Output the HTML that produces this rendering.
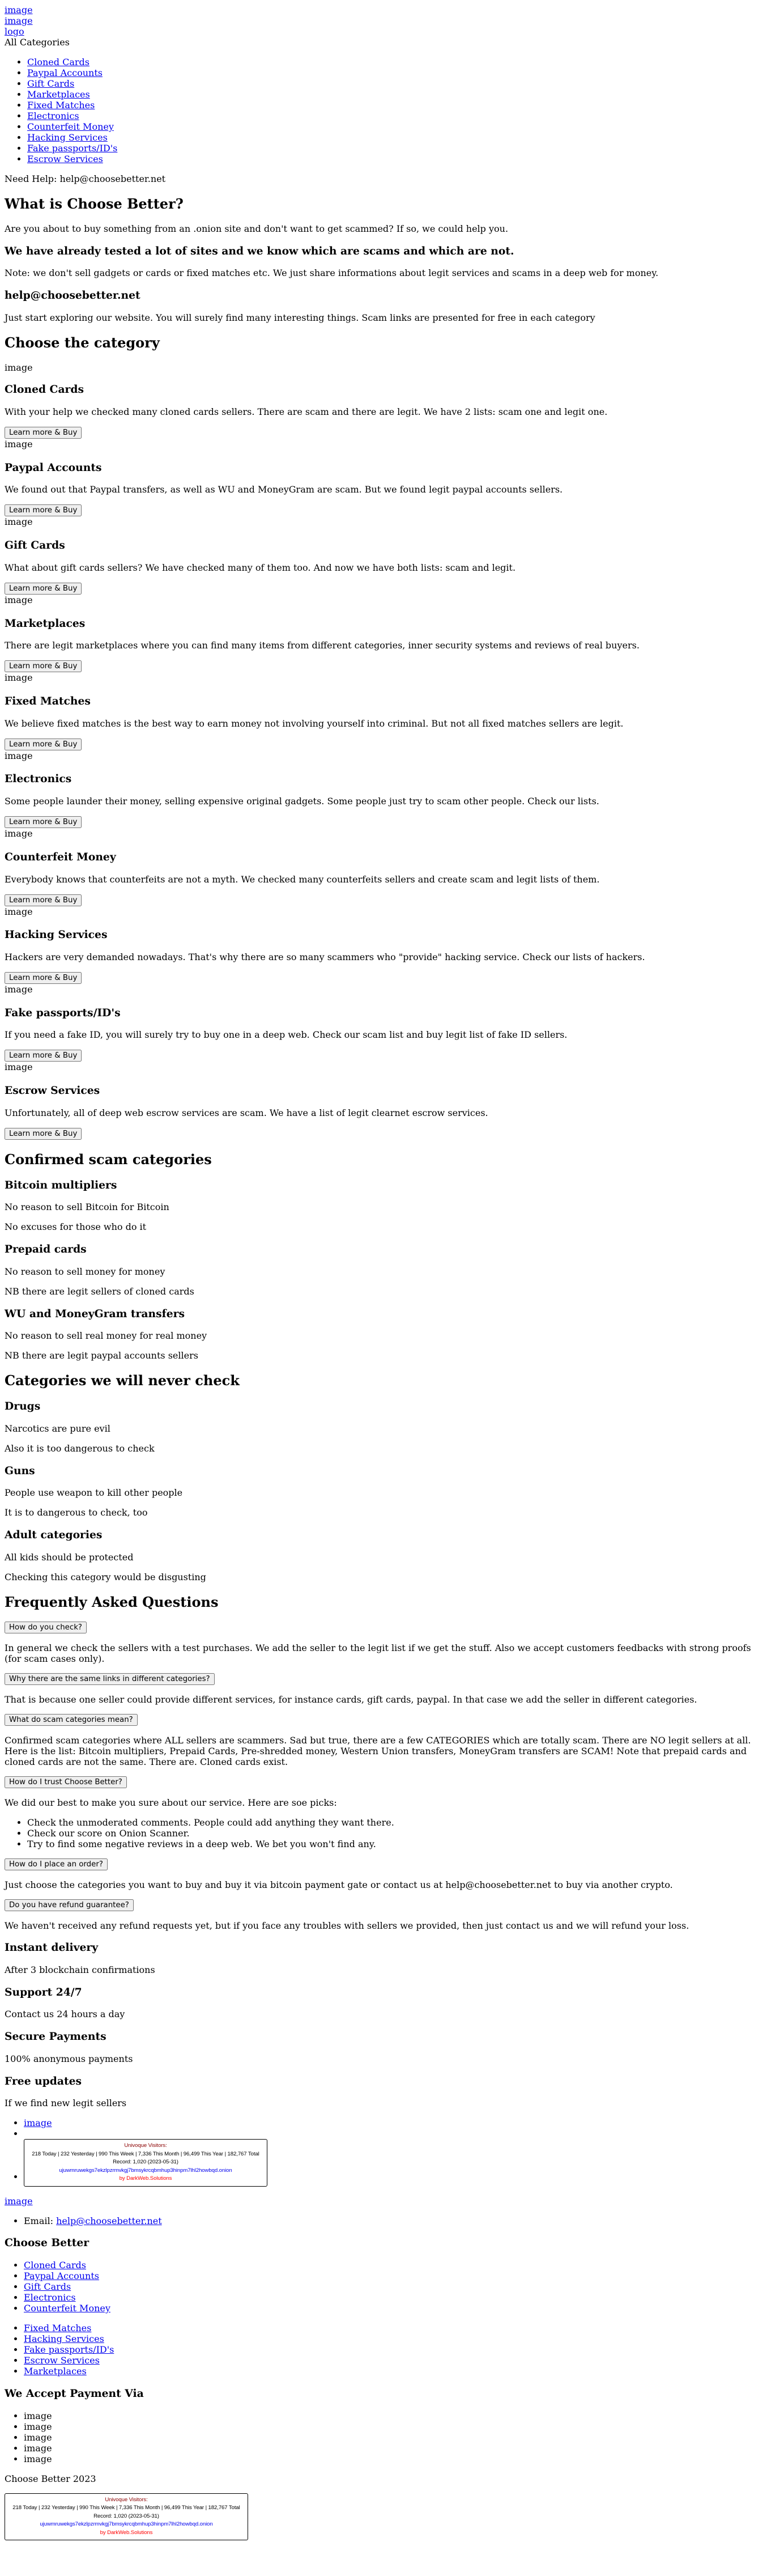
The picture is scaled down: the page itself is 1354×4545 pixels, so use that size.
<!DOCTYPE html>
<html><head><meta charset="utf-8">
<style>
body{font-family:"DejaVu Serif",serif;font-size:16px;margin:8px;color:#000;background:#fff}
a{color:#0000ee}
button{font-family:"DejaVu Sans",sans-serif;font-size:13.333px}
.img{padding-bottom:2px}
.faq button{display:block}
.ft{padding-left:34px}
.vis{display:inline-block;width:428px;border:1px solid #000;border-radius:3px;text-align:center;font-family:"Liberation Sans",Arial,sans-serif;font-size:9.6px;line-height:14.5px;padding:4px 0 5px;letter-spacing:-0.1px}
.vis .t{color:#8b0000}
.vis .o{color:#0000ee}
.vis .r{color:#f00}
</style></head><body>
<div><a href="#">image</a></div>
<div><a href="#">image</a></div>
<div><a href="#">logo</a></div>
<div>All Categories</div>
<ul>
<li><a href="#">Cloned Cards</a></li>
<li><a href="#">Paypal Accounts</a></li>
<li><a href="#">Gift Cards</a></li>
<li><a href="#">Marketplaces</a></li>
<li><a href="#">Fixed Matches</a></li>
<li><a href="#">Electronics</a></li>
<li><a href="#">Counterfeit Money</a></li>
<li><a href="#">Hacking Services</a></li>
<li><a href="#">Fake passports/ID's</a></li>
<li><a href="#">Escrow Services</a></li>
</ul>
<div>Need Help: help@choosebetter.net</div>
<h2>What is Choose Better?</h2>
<p>Are you about to buy something from an .onion site and don't want to get scammed? If so, we could help you.</p>
<h3>We have already tested a lot of sites and we know which are scams and which are not.</h3>
<p>Note: we don't sell gadgets or cards or fixed matches etc. We just share informations about legit services and scams in a deep web for money.</p>
<h3>help@choosebetter.net</h3>
<p>Just start exploring our website. You will surely find many interesting things. Scam links are presented for free in each category</p>
<h2>Choose the category</h2>
<p>image</p>
<h3>Cloned Cards</h3>
<p>With your help we checked many cloned cards sellers. There are scam and there are legit. We have 2 lists: scam one and legit one.</p>
<div><button>Learn more &amp; Buy</button></div><div class="img">image</div>
<h3>Paypal Accounts</h3>
<p>We found out that Paypal transfers, as well as WU and MoneyGram are scam. But we found legit paypal accounts sellers.</p>
<div><button>Learn more &amp; Buy</button></div><div class="img">image</div>
<h3>Gift Cards</h3>
<p>What about gift cards sellers? We have checked many of them too. And now we have both lists: scam and legit.</p>
<div><button>Learn more &amp; Buy</button></div><div class="img">image</div>
<h3>Marketplaces</h3>
<p>There are legit marketplaces where you can find many items from different categories, inner security systems and reviews of real buyers.</p>
<div><button>Learn more &amp; Buy</button></div><div class="img">image</div>
<h3>Fixed Matches</h3>
<p>We believe fixed matches is the best way to earn money not involving yourself into criminal. But not all fixed matches sellers are legit.</p>
<div><button>Learn more &amp; Buy</button></div><div class="img">image</div>
<h3>Electronics</h3>
<p>Some people launder their money, selling expensive original gadgets. Some people just try to scam other people. Check our lists.</p>
<div><button>Learn more &amp; Buy</button></div><div class="img">image</div>
<h3>Counterfeit Money</h3>
<p>Everybody knows that counterfeits are not a myth. We checked many counterfeits sellers and create scam and legit lists of them.</p>
<div><button>Learn more &amp; Buy</button></div><div class="img">image</div>
<h3>Hacking Services</h3>
<p>Hackers are very demanded nowadays. That's why there are so many scammers who "provide" hacking service. Check our lists of hackers.</p>
<div><button>Learn more &amp; Buy</button></div><div class="img">image</div>
<h3>Fake passports/ID's</h3>
<p>If you need a fake ID, you will surely try to buy one in a deep web. Check our scam list and buy legit list of fake ID sellers.</p>
<div><button>Learn more &amp; Buy</button></div><div class="img">image</div>
<h3>Escrow Services</h3>
<p>Unfortunately, all of deep web escrow services are scam. We have a list of legit clearnet escrow services.</p>
<div><button>Learn more &amp; Buy</button></div>
<h2>Confirmed scam categories</h2>
<h3>Bitcoin multipliers</h3>
<p>No reason to sell Bitcoin for Bitcoin</p>
<p>No excuses for those who do it</p>
<h3>Prepaid cards</h3>
<p>No reason to sell money for money</p>
<p>NB there are legit sellers of cloned cards</p>
<h3>WU and MoneyGram transfers</h3>
<p>No reason to sell real money for real money</p>
<p>NB there are legit paypal accounts sellers</p>
<h2>Categories we will never check</h2>
<h3>Drugs</h3>
<p>Narcotics are pure evil</p>
<p>Also it is too dangerous to check</p>
<h3>Guns</h3>
<p>People use weapon to kill other people</p>
<p>It is to dangerous to check, too</p>
<h3>Adult categories</h3>
<p>All kids should be protected</p>
<p>Checking this category would be disgusting</p>
<h2>Frequently Asked Questions</h2>
<div class="faq">
<button>How do you check?</button>
<p>In general we check the sellers with a test purchases. We add the seller to the legit list if we get the stuff. Also we accept customers feedbacks with strong proofs (for scam cases only).</p>
<button>Why there are the same links in different categories?</button>
<p>That is because one seller could provide different services, for instance cards, gift cards, paypal. In that case we add the seller in different categories.</p>
<button>What do scam categories mean?</button>
<p>Confirmed scam categories where ALL sellers are scammers. Sad but true, there are a few CATEGORIES which are totally scam. There are NO legit sellers at all. Here is the list: Bitcoin multipliers, Prepaid Cards, Pre-shredded money, Western Union transfers, MoneyGram transfers are SCAM! Note that prepaid cards and cloned cards are not the same. There are. Cloned cards exist.</p>
<button>How do I trust Choose Better?</button>
<p>We did our best to make you sure about our service. Here are soe picks:</p>
<ul>
<li>Check the unmoderated comments. People could add anything they want there.</li>
<li>Check our score on Onion Scanner.</li>
<li>Try to find some negative reviews in a deep web. We bet you won't find any.</li>
</ul>
<button>How do I place an order?</button>
<p>Just choose the categories you want to buy and buy it via bitcoin payment gate or contact us at help@choosebetter.net to buy via another crypto.</p>
<button>Do you have refund guarantee?</button>
<p>We haven't received any refund requests yet, but if you face any troubles with sellers we provided, then just contact us and we will refund your loss.</p>
</div>
<h3>Instant delivery</h3>
<p>After 3 blockchain confirmations</p>
<h3>Support 24/7</h3>
<p>Contact us 24 hours a day</p>
<h3>Secure Payments</h3>
<p>100% anonymous payments</p>
<h3>Free updates</h3>
<p>If we find new legit sellers</p>
<ul class="ft">
<li><a href="#">image</a></li>
<li></li>
<li><div class="vis"><div class="t">Univoque Visitors:</div><div>218 Today | 232 Yesterday | 990 This Week | 7,336 This Month | 96,499 This Year | 182,767 Total<br>Record: 1,020 (2023-05-31)</div><div class="o">ujuwmruwekgs7ekzlpzrmvkgj7bmsykrcqbmhup3hinpm7lhl2howbqd.onion</div><div class="r">by DarkWeb.Solutions</div></div></li>
</ul>
<div><a href="#">image</a></div>
<ul class="ft">
<li>Email: <a href="#">help@choosebetter.net</a></li>
</ul>
<h3>Choose Better</h3>
<ul class="ft">
<li><a href="#">Cloned Cards</a></li>
<li><a href="#">Paypal Accounts</a></li>
<li><a href="#">Gift Cards</a></li>
<li><a href="#">Electronics</a></li>
<li><a href="#">Counterfeit Money</a></li>
</ul>
<ul class="ft">
<li><a href="#">Fixed Matches</a></li>
<li><a href="#">Hacking Services</a></li>
<li><a href="#">Fake passports/ID's</a></li>
<li><a href="#">Escrow Services</a></li>
<li><a href="#">Marketplaces</a></li>
</ul>
<h3>We Accept Payment Via</h3>
<ul class="ft">
<li>image</li><li>image</li><li>image</li><li>image</li><li>image</li>
</ul>
<p>Choose Better 2023</p>
<div class="vis"><div class="t">Univoque Visitors:</div><div>218 Today | 232 Yesterday | 990 This Week | 7,336 This Month | 96,499 This Year | 182,767 Total<br>Record: 1,020 (2023-05-31)</div><div class="o">ujuwmruwekgs7ekzlpzrmvkgj7bmsykrcqbmhup3hinpm7lhl2howbqd.onion</div><div class="r">by DarkWeb.Solutions</div></div>
</body></html>
